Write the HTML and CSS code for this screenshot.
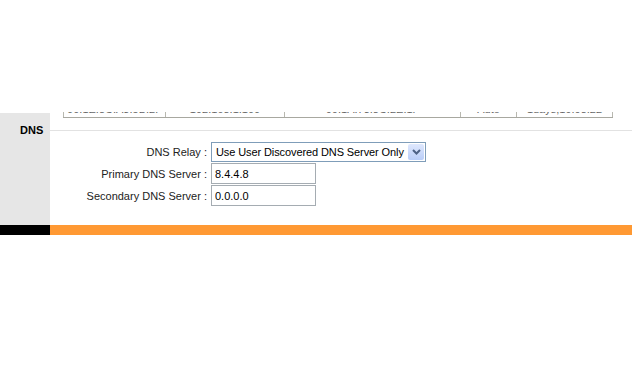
FILE: index.html
```html
<!DOCTYPE html>
<html>
<head>
	<meta charset="UTF-8">
<link rel="stylesheet" href="styles.css">
</head>
<body>
<div class="top"></div>
<div class="warp">
	<div class="side"><span class="title">DNS</span></div>
	<div class="main">
		<div class="clients">
			<div class="cell c1"><span>00:1E:8C:A3:5B:2F</span></div>
			<div class="cell c2"><span>192.168.1.100</span></div>
			<div class="cell c3"><span>00:1A:73:8C:2E:1F</span></div>
			<div class="cell c4"><span>Auto</span></div>
			<div class="cell c5"><span>1days,19:08:22</span></div>
		</div>
		<div class="line"></div>
		<div class="form">
			<label class="lbl">DNS Relay :</label>
			<div class="sel">
				<select id="relay">
					<option>Use User Discovered DNS Server Only</option>
					<option>Use Auto Discovered DNS Server Only</option>
					<option>DNS Relay Disabled</option>
				</select>
				<span class="arrow"><svg width="9" height="6" viewBox="0 0 9 6"><path d="M1 1 L4.5 4.5 L8 1" fill="none" stroke="#4d6185" stroke-width="2"/></svg></span>
			</div>
			<label class="lbl">Primary DNS Server :</label>
			<div><input type="text" class="txt" id="dns1" value="8.4.4.8"></div>
			<label class="lbl">Secondary DNS Server :</label>
			<div><input type="text" class="txt" id="dns2" value="0.0.0.0"></div>
		</div>
	</div>
</div>
<div class="bar"><div class="black"></div><div class="orange"></div></div>
</body>
</html>
```
FILE: styles.css
```css
body{margin:0;background:#fff;font-family:"Liberation Sans",Arial,sans-serif;font-size:11px;color:#000;}
.top{height:112px;}
.warp{display:flex;height:113px;}
.side{width:50px;margin-top:1px;background:#e6e6e6;padding:11px 0 0 20px;box-sizing:border-box;}
.title{font-weight:bold;line-height:13px;}
.main{flex:1;}
.clients{display:flex;margin-left:13px;width:550px;height:5px;overflow:hidden;border-bottom:1px solid #a8a8a0;}
.cell{border-left:1px solid #b8b8b0;text-align:center;color:#666;box-sizing:border-box;}
.cell span{display:block;line-height:13px;margin-top:-9px;}
.c1{width:102px;}
.c2{width:119px;}
.c3{width:176px;}
.c4{width:56px;}
.c5{width:97px;border-right:1px solid #b8b8b0;}
.line{height:1px;background:#e2e2e2;margin-top:12px;}
.form{display:grid;grid-template-columns:157px auto;column-gap:4px;row-gap:1px;margin-top:11px;align-items:center;}
.lbl{text-align:right;color:#222;}
.sel{position:relative;width:215px;height:20px;}
.sel select{-webkit-appearance:none;appearance:none;width:215px;height:20px;margin:0;padding:0 0 0 4px;border:1px solid #7f9db9;background:#fff;font-family:"Liberation Sans",Arial,sans-serif;font-size:11px;letter-spacing:-0.1px;color:#000;outline:none;}
.arrow{position:absolute;right:2px;top:2px;width:16px;height:16px;background:linear-gradient(#dfe8fd,#b9cdf8);border-radius:2px;display:flex;align-items:center;justify-content:center;pointer-events:none;}
.txt{width:105px;height:21px;margin:0;padding:0 0 0 3px;box-sizing:border-box;border:1px solid #a5acb2;font-family:"Liberation Sans",Arial,sans-serif;font-size:11px;color:#000;outline:none;}
.bar{display:flex;height:10px;}
.black{width:50px;background:#000;}
.orange{flex:1;background:#ff9933;}
```
